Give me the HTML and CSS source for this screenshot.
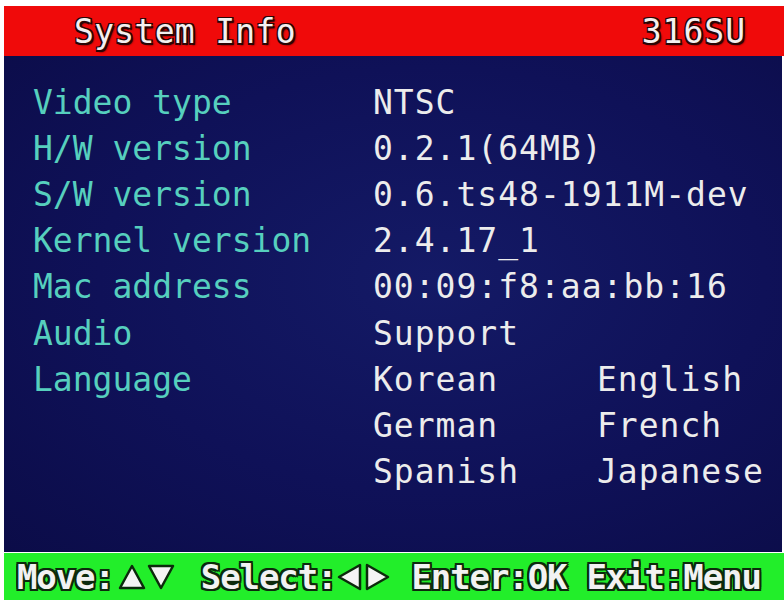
FILE: index.html
```html
<!DOCTYPE html>
<html>
<head>
<meta charset="utf-8">
<link rel="stylesheet" href="styles.css">
</head>
<body>
<div class="screen">
  <div class="titlebar">
    <span class="title">System Info</span>
    <span class="model">316SU</span>
  </div>
  <div class="content">
    <div class="grid">
      <div class="label">Video type</div><div class="value span2">NTSC</div>
      <div class="label">H/W version</div><div class="value span2">0.2.1(64MB)</div>
      <div class="label">S/W version</div><div class="value span2">0.6.ts48-1911M-dev</div>
      <div class="label">Kernel version</div><div class="value span2">2.4.17_1</div>
      <div class="label">Mac address</div><div class="value span2">00:09:f8:aa:bb:16</div>
      <div class="label">Audio</div><div class="value span2">Support</div>
      <div class="label">Language</div><div class="value">Korean</div><div class="value">English</div>
      <div class="label"></div><div class="value">German</div><div class="value">French</div>
      <div class="label"></div><div class="value">Spanish</div><div class="value">Japanese</div>
    </div>
  </div>
  <div class="footer">
    <span class="key">Move:</span>
    <svg class="tri up" viewBox="0 0 28 26"><polygon points="14,2 26,24 2,24"/></svg>
    <svg class="tri down" viewBox="0 0 28 26"><polygon points="2,2 26,2 14,24"/></svg>
    <span class="key sel">Select:</span>
    <svg class="tri left" viewBox="0 0 26 28"><polygon points="24,2 24,26 3,14"/></svg>
    <svg class="tri right" viewBox="0 0 26 28"><polygon points="2,2 23,14 2,26"/></svg>
    <span class="key enter">Enter:OK</span>
    <span class="key exit">Exit:Menu</span>
  </div>
</div>
</body>
</html>
```
FILE: styles.css
```css
html, body {
  margin: 0;
  padding: 0;
  background: #ffffff;
}
body {
  width: 784px;
  height: 604px;
  overflow: hidden;
  font-family: "DejaVu Sans Mono", "Liberation Mono", monospace;
}
.screen {
  margin: 6px 0 0 4px;
  width: 780px;
}
.titlebar {
  height: 50px;
  background: #f00a0a;
  display: flex;
  align-items: center;
  justify-content: space-between;
  padding: 0 38px 0 70px;
  font-size: 33px;
  color: #f4f0f0;
  text-shadow: -1.5px -1.5px 0 #2a0505, 1.5px -1.5px 0 #2a0505, -1.5px 1.5px 0 #2a0505, 1.5px 1.5px 0 #2a0505, 2px 2px 2px #200000;
}
.title { letter-spacing: 0.3px; }
.model { letter-spacing: 1px; }
.content {
  height: 496px;
  margin-right: 2px;
  box-sizing: border-box;
  padding: 23px 0 0 29px;
  background: radial-gradient(ellipse at 55% 45%, #141a66 0%, #0f1158 55%, #0b0c48 100%);
}
.grid {
  display: grid;
  grid-template-columns: 340px 224px 1fr;
  grid-auto-rows: 46.2px;
  align-items: center;
  font-size: 33px;
}
.label {
  color: #56cfbe;
  letter-spacing: 0px;
  white-space: nowrap;
}
.value {
  color: #ececec;
  letter-spacing: 1px;
  white-space: nowrap;
}
.span2 { grid-column: span 2; }
.footer {
  height: 47px;
  margin-top: 1px;
  background: #22ee2a;
  display: flex;
  align-items: center;
  padding-left: 13px;
  font-size: 34px;
  font-weight: bold;
  color: #f2f2f2;
  text-shadow: -2px -2px 0 #0c2a0c, 2px -2px 0 #0c2a0c, -2px 2px 0 #0c2a0c, 2px 2px 0 #0c2a0c, 0 2px 0 #0c2a0c, 2px 0 0 #0c2a0c, -2px 0 0 #0c2a0c, 0 -2px 0 #0c2a0c;
}
.key { letter-spacing: -1.1px; white-space: nowrap; flex-shrink: 0; }
.tri {
  flex-shrink: 0;
  fill: #f4f4f4;
  stroke: #0c2a0c;
  stroke-width: 2.5;
  stroke-linejoin: round;
  width: 28px;
  height: 26px;
}
.tri.up { margin-left: 4px; }
.tri.down { margin-left: 1px; }
.tri.left { width: 26px; height: 28px; margin-left: 0px; }
.tri.right { width: 26px; height: 28px; margin-left: 3px; }
.sel { margin-left: 26px; }
.enter { margin-left: 20px; }
.exit { margin-left: 20px; }
```
